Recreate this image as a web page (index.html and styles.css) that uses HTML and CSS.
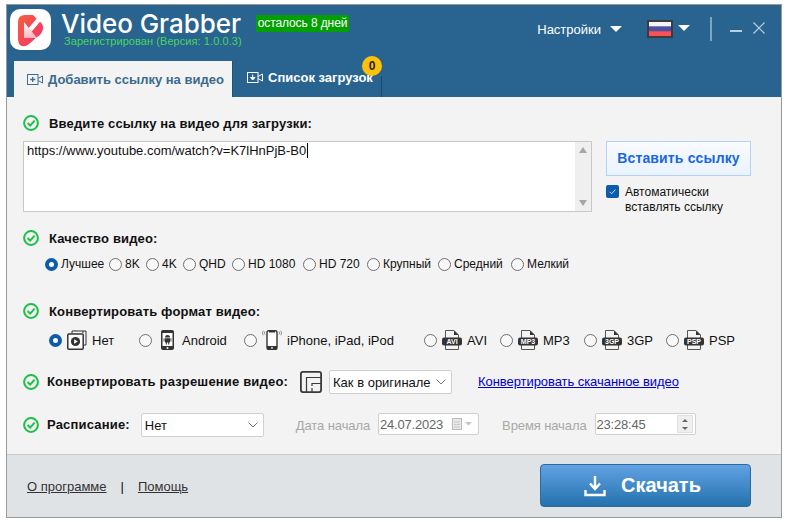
FILE: index.html
```html
<!DOCTYPE html>
<html lang="ru">
<head>
    <meta charset="UTF-8">
    <title>Video Grabber</title>
    <link rel="stylesheet" href="styles.css">
</head>
<body>
    <svg class="defs" width="0" height="0">
        <symbol id="okIcon" viewBox="0 0 16 16">
            <circle cx="8" cy="8" r="6.9" fill="none" stroke="#1cbf48" stroke-width="2"/>
            <path d="M4.6 8 7.2 10.6 11.6 5.6" fill="none" stroke="#1cbf48" stroke-width="2"/>
        </symbol>
        <symbol id="fileIcon" viewBox="0 0 20 20">
            <path d="M3.5 8V.5H12L16.5 5V8M3.5 15V19.5H16.5V15" fill="none" stroke="#555" stroke-width="1"/>
            <path d="M12 .5V5H16.5Z" fill="#333"/>
            <rect x="0" y="7.5" width="20" height="8" rx="2" fill="#333"/>
        </symbol>
    </svg>

    <div id="window">
        <div id="header">
            <div class="top-row">
                <svg class="logo" viewBox="0 0 41 41">
                    <defs>
                        <linearGradient id="logoGrad" x1="0" y1="0" x2="1" y2="1">
                            <stop offset="0" stop-color="#f4613c"/>
                            <stop offset="1" stop-color="#f52f72"/>
                        </linearGradient>
                        <linearGradient id="arrowGrad" x1="0" y1="0" x2="0" y2="1">
                            <stop offset="0" stop-color="#fff"/>
                            <stop offset="1" stop-color="#ffb4bc"/>
                        </linearGradient>
                    </defs>
                    <rect width="41" height="41" rx="10" fill="#fff"/>
                    <path d="M8 13Q8 6 15 6H23L28 11Q34 15 33 20Q32 25 27 28L19 35Q14 39 10 36Q8 34 8 29Z" fill="url(#logoGrad)"/>
                    <path d="M20 21 31 8" stroke="#fff" stroke-width="4.5" fill="none"/>
                    <path d="M14 13V29H27Z" fill="url(#arrowGrad)"/>
                </svg>
                <div class="title-col">
                    <div class="app-title">Video Grabber</div>
                    <div class="reg-text">Зарегистрирован (Версия: 1.0.0.3)</div>
                </div>
                <div class="days-left">осталось 8 дней</div>
                <div class="top-right">
                    <span class="settings">Настройки</span>
                    <span class="arrow settings-arrow"></span>
                    <svg class="flag" viewBox="0 0 26 18">
                        <rect width="26" height="18" fill="#3c3c3c"/>
                        <rect x="2" y="2" width="22" height="4.6" fill="#f4f4f8"/>
                        <rect x="2" y="6.6" width="22" height="4.6" fill="#4a4fa8"/>
                        <rect x="2" y="11.2" width="22" height="4.8" fill="#f9505a"/>
                    </svg>
                    <span class="arrow flag-arrow"></span>
                    <span class="divider"></span>
                    <span class="minimize"></span>
                    <svg class="close" viewBox="0 0 12 12"><path d="M.5.5 11.5 11.5M11.5.5.5 11.5" stroke="#b9cfdd" stroke-width="1.2" fill="none"/></svg>
                </div>
            </div>
            <div class="tabs">
                <div class="tab active">
                    <svg class="tab-icon" viewBox="0 0 16 11">
                        <rect x=".5" y=".5" width="10.5" height="10" fill="none" stroke="#3d6d90"/>
                        <path d="M5.7 3V8M3.2 5.5H8.2" stroke="#3d6d90" stroke-width="1.3"/>
                        <path d="M11 4.5 15.5 2V9L11 6.5" fill="none" stroke="#3d6d90"/>
                    </svg>
                    Добавить ссылку на видео
                </div>
                <div class="tab inactive">
                    <svg class="tab-icon" viewBox="0 0 16 11">
                        <rect x=".5" y=".5" width="10.5" height="10" fill="none" stroke="#fff"/>
                        <path d="M5.7 2.5V6M3.5 5.5 5.7 8 8 5.5Z" stroke="#fff" fill="#fff"/>
                        <path d="M11 4.5 15.5 2V9L11 6.5" fill="none" stroke="#fff"/>
                    </svg>
                    Список загрузок
                    <span class="badge">0</span>
                </div>
            </div>
        </div>

        <div id="main">
            <div class="section-title first">
                <svg class="ok"><use href="#okIcon"/></svg>
                <label>Введите ссылку на видео для загрузки:</label>
            </div>
            <div class="url-row">
                <div class="url-box">
                    <div class="url-text"><span>https://www.youtube.com/watch?v=K7lHnPjB-B0</span></div>
                    <div class="scrollbar">
                        <span class="sb-up"></span>
                        <span class="sb-down"></span>
                    </div>
                </div>
                <div class="paste-col">
                    <button class="paste-btn" type="button">Вставить ссылку</button>
                    <div class="auto-paste">
                        <span class="checkbox">
                            <svg viewBox="0 0 13 13"><path d="M3.6 6.8 5.6 8.8 9.4 4.6" fill="none" stroke="#cfe2f5" stroke-width="1"/></svg>
                        </span>
                        <span class="auto-text">Автоматически<br>вставлять ссылку</span>
                    </div>
                </div>
            </div>

            <div class="section-title quality">
                <svg class="ok"><use href="#okIcon"/></svg>
                <label>Качество видео:</label>
            </div>
            <div class="quality-row">
                <span class="opt"><i class="radio on"></i>Лучшее</span>
                <span class="opt"><i class="radio"></i>8K</span>
                <span class="opt"><i class="radio"></i>4K</span>
                <span class="opt"><i class="radio"></i>QHD</span>
                <span class="opt"><i class="radio"></i>HD 1080</span>
                <span class="opt"><i class="radio"></i>HD 720</span>
                <span class="opt"><i class="radio"></i>Крупный</span>
                <span class="opt"><i class="radio"></i>Средний</span>
                <span class="opt"><i class="radio"></i>Мелкий</span>
            </div>

            <div class="section-title format">
                <svg class="ok"><use href="#okIcon"/></svg>
                <label>Конвертировать формат видео:</label>
            </div>
            <div class="format-row">
                <span class="fmt">
                    <i class="radio on"></i>
                    <svg class="fmt-icon wide" viewBox="0 0 20 20">
                        <path d="M5 3.5V1H16V3M8 1V.5M16 1H19V15H17" fill="none" stroke="#333" stroke-width="1"/>
                        <rect x=".8" y="4" width="15.4" height="15.2" rx="1" fill="#fff" stroke="#333" stroke-width="1.5"/>
                        <circle cx="8.5" cy="11.5" r="4.6" fill="#333"/>
                        <path d="M7.2 9.2V13.8L10.8 11.5Z" fill="#fff"/>
                    </svg>
                    Нет
                </span>
                <span class="fmt">
                    <i class="radio"></i>
                    <svg class="fmt-icon android" viewBox="0 0 15 20">
                        <rect x="1" y="0" width="13" height="20" rx="2" fill="#333"/>
                        <rect x="2.5" y="3" width="10" height="13" fill="#fff"/>
                        <path d="M5 7.5A2.5 2.5 0 0 1 10 7.5ZM5 8.2H10V12.5H5ZM3.6 8.2H4.5V11.5H3.6ZM10.5 8.2H11.4V11.5H10.5ZM5.8 12.5H6.8V14.6H5.8ZM8.2 12.5H9.2V14.6H8.2Z" fill="#333"/>
                        <circle cx="7.5" cy="18" r="1" fill="#fff"/>
                    </svg>
                    Android
                </span>
                <span class="fmt">
                    <i class="radio"></i>
                    <svg class="fmt-icon wide" viewBox="0 0 20 20">
                        <rect x="5" y=".7" width="10" height="18.6" rx="1.5" fill="#fff" stroke="#333" stroke-width="1.4"/>
                        <path d="M5 16H15V19.5H5ZM7 1H13V2.4H7Z" fill="#333"/>
                        <circle cx="10" cy="17.8" r=".9" fill="#fff"/>
                        <path d="M3 1.5Q1.8 3 3 4.5M1.2.8Q-.4 3 1.2 5.2M17 1.5Q18.2 3 17 4.5M18.8.8Q20.4 3 18.8 5.2" fill="none" stroke="#666" stroke-width=".7"/>
                    </svg>
                    iPhone, iPad, iPod
                </span>
                <span class="fmt">
                    <i class="radio"></i>
                    <svg class="fmt-icon" viewBox="0 0 20 20"><use href="#fileIcon"/><text x="10" y="14" class="file-label">AVI</text></svg>
                    AVI
                </span>
                <span class="fmt">
                    <i class="radio"></i>
                    <svg class="fmt-icon" viewBox="0 0 20 20"><use href="#fileIcon"/><text x="10" y="14" class="file-label">MP3</text></svg>
                    MP3
                </span>
                <span class="fmt">
                    <i class="radio"></i>
                    <svg class="fmt-icon" viewBox="0 0 20 20"><use href="#fileIcon"/><text x="10" y="14" class="file-label">3GP</text></svg>
                    3GP
                </span>
                <span class="fmt">
                    <i class="radio"></i>
                    <svg class="fmt-icon" viewBox="0 0 20 20"><use href="#fileIcon"/><text x="10" y="14" class="file-label">PSP</text></svg>
                    PSP
                </span>
            </div>

            <div class="option-row resolution">
                <svg class="ok"><use href="#okIcon"/></svg>
                <label class="option-label">Конвертировать разрешение видео:</label>
                <svg class="res-icon" viewBox="0 0 22 22">
                    <rect x=".9" y=".9" width="20.2" height="20.2" rx="2" fill="none" stroke="#3a3a3a" stroke-width="1.8"/>
                    <path d="M6.5 21V6.5H21" fill="none" stroke="#3a3a3a" stroke-width="1.2"/>
                    <path d="M12 21V17M12 15V12.5H21" fill="none" stroke="#3a3a3a" stroke-width="1.2"/>
                </svg>
                <div class="select res-select">Как в оригинале<svg class="chevron" viewBox="0 0 10 6"><path d="M.5.5 5 5 9.5.5" fill="none" stroke="#777"/></svg></div>
                <a class="convert-link" href="#">Конвертировать скачанное видео</a>
            </div>

            <div class="option-row schedule">
                <svg class="ok"><use href="#okIcon"/></svg>
                <label class="option-label">Расписание:</label>
                <div class="select sched-select">Нет<svg class="chevron" viewBox="0 0 10 6"><path d="M.5.5 5 5 9.5.5" fill="none" stroke="#777"/></svg></div>
                <span class="muted date-label">Дата начала</span>
                <div class="field date-field">
                    24.07.2023
                    <svg class="cal" viewBox="0 0 20 12">
                        <rect x=".5" y=".5" width="9" height="11" fill="#e8e8e8" stroke="#bbb"/>
                        <path d="M2 4H8M2 6.5H8M2 9H8" stroke="#c8c8c8"/>
                        <path d="M13 4H20L16.5 7.5Z" fill="#c4c4c4"/>
                    </svg>
                </div>
                <span class="muted time-label">Время начала</span>
                <div class="field time-field">
                    23:28:45
                    <div class="spin">
                        <span class="spin-up"></span>
                        <span class="spin-down"></span>
                    </div>
                </div>
            </div>
        </div>

        <div id="footer">
            <a class="foot-link" href="#">О программе</a>
            <span class="foot-sep">|</span>
            <a class="foot-link" href="#">Помощь</a>
            <button class="download-btn" type="button">
                <svg viewBox="0 0 22 22"><path d="M11 1V13M6 8.5 11 14 16 8.5M1.5 15V20H20.5V15" fill="none" stroke="#fff" stroke-width="2.4"/></svg>
                Скачать
            </button>
        </div>
    </div>
</body>
</html>
```

FILE: styles.css
```css
* {
    box-sizing: border-box;
}
html, body {
    margin: 0;
    padding: 0;
    background-color: #fff;
    font-family: "Liberation Sans", Arial, sans-serif;
    font-size: 12px;
    color: #111;
}
.defs {
    position: absolute;
}
#window {
    width: 776px;
    height: 514px;
    margin: 4px 0 0 6px;
    border: 1px solid #999;
    display: flex;
    flex-direction: column;
}

/* header */
#header {
    height: 92px;
    background-color: #28648f;
    color: #fff;
}
.top-row {
    height: 56px;
    display: flex;
    align-items: flex-start;
    padding-left: 3px;
}
.logo {
    width: 41px;
    height: 41px;
    margin-top: 4px;
}
.title-col {
    width: 180px;
    margin-left: 10px;
}
.app-title {
    margin-top: 8px;
    height: 22px;
    line-height: 22px;
    font-family: Inter, "Liberation Sans", sans-serif;
    font-size: 26px;
    font-weight: 500;
    letter-spacing: -.05px;
    white-space: nowrap;
}
.reg-text {
    margin-left: 3px;
    height: 12px;
    line-height: 12px;
    font-size: 11px;
    letter-spacing: .07px;
    color: #47d65c;
    white-space: nowrap;
}
.days-left {
    margin: 10px 0 0 15px;
    width: 93px;
    height: 17px;
    line-height: 17px;
    background-color: #00a000;
    text-align: center;
    font-size: 12px;
    letter-spacing: -.1px;
}
.top-right {
    margin-left: auto;
    height: 48px;
    padding-right: 16px;
    display: flex;
    align-items: center;
}
.settings {
    font-size: 13px;
}
.arrow {
    width: 0;
    height: 0;
    border-left: 6px solid transparent;
    border-right: 6px solid transparent;
    border-top: 6px solid #fff;
}
.settings-arrow {
    margin-left: 9px;
}
.flag {
    width: 26px;
    height: 18px;
    margin-left: 25px;
}
.flag-arrow {
    margin: -2px 0 0 5px;
}
.divider {
    width: 2px;
    height: 24px;
    margin-left: 20px;
    background-color: #7fa5bf;
}
.minimize {
    width: 12px;
    height: 2px;
    margin: 3px 0 0 18px;
    background-color: #b9cfdd;
}
.close {
    width: 12px;
    height: 12px;
    margin: -2px 0 0 11px;
}
.tabs {
    height: 36px;
    display: flex;
    padding-left: 7px;
}
.tab {
    display: flex;
    align-items: center;
    position: relative;
    font-size: 13px;
    font-weight: bold;
    white-space: nowrap;
}
.tab.active {
    width: 218px;
    padding-left: 13px;
    background-color: #f3f3f3;
    color: #3a6a8c;
}
.tab.inactive {
    width: 150px;
    padding: 0 0 4px 14px;
    border-left: 1px solid #1f5478;
    color: #fff;
}
.tab.inactive::after {
    content: "";
    position: absolute;
    right: 0;
    bottom: 0;
    width: 1px;
    height: 21px;
    background-color: #1c4a6b;
}
.tab-icon {
    width: 16px;
    height: 11px;
    margin-right: 5px;
}
.badge {
    position: absolute;
    top: -5px;
    right: 0;
    width: 20px;
    height: 20px;
    line-height: 20px;
    border-radius: 50%;
    background-color: #ffc107;
    color: #222;
    text-align: center;
    font-size: 12px;
}

/* main */
#main {
    height: 357px;
    padding-left: 16px;
    background-color: #f3f3f3;
}
.section-title {
    height: 16px;
    display: flex;
    align-items: center;
}
.section-title.first {
    margin-top: 18px;
}
.section-title.quality {
    margin-top: 18px;
}
.section-title.format {
    margin-top: 31px;
}
.ok {
    width: 16px;
    height: 16px;
    flex: none;
}
.section-title label {
    margin-left: 10px;
    font-size: 13px;
    font-weight: bold;
    letter-spacing: .15px;
    white-space: nowrap;
}
.url-row {
    display: flex;
    height: 71px;
    margin-top: 10px;
}
.url-box {
    width: 569px;
    height: 71px;
    display: flex;
    background-color: #fff;
    border: 1px solid #c8c8c8;
}
.url-text {
    flex: 1;
    padding: 1px 3px;
    font-size: 13px;
    line-height: 16px;
}
.url-text span {
    border-right: 1px solid #000;
    padding-right: 1px;
}
.scrollbar {
    width: 16px;
    background-color: #efefef;
    display: flex;
    flex-direction: column;
    justify-content: space-between;
    align-items: center;
    padding: 5px 0;
}
.sb-up, .sb-down {
    width: 0;
    height: 0;
    border-left: 4px solid transparent;
    border-right: 4px solid transparent;
}
.sb-up {
    border-bottom: 6px solid #a6a6a6;
}
.sb-down {
    border-top: 6px solid #a6a6a6;
}
.paste-col {
    margin-left: 14px;
    width: 145px;
}
.paste-btn {
    display: block;
    width: 145px;
    height: 35px;
    padding: 0 0 1px;
    background: linear-gradient(#f9fbff, #e9f2fd);
    border: 1px solid #b5d4f5;
    color: #1767dd;
    font-family: inherit;
    font-size: 14px;
    font-weight: bold;
    letter-spacing: .15px;
}
.auto-paste {
    display: flex;
    margin-top: 9px;
}
.checkbox {
    width: 13px;
    height: 13px;
    border-radius: 2px;
    background-color: #0d5cab;
    flex: none;
}
.checkbox svg {
    display: block;
}
.auto-text {
    margin-left: 6px;
    line-height: 15px;
    white-space: nowrap;
}
.radio {
    display: inline-block;
    width: 13px;
    height: 13px;
    flex: none;
    border: 1px solid #6e6e6e;
    border-radius: 50%;
    background-color: #f8f8f8;
}
.radio.on {
    border: 4px solid #0d5cab;
    background-color: #fff;
}
.quality-row {
    height: 16px;
    margin: 10px 0 0 22px;
    display: grid;
    grid-template-columns: 64px 37px 37px 49px 71px 64px 71px 73px auto;
}
.opt {
    display: flex;
    align-items: center;
    gap: 3px;
    white-space: nowrap;
}
.format-row {
    height: 24px;
    margin: 9px 0 0 26px;
    display: grid;
    grid-template-columns: 90px 105px 180px 76px 84px 82px auto;
}
.fmt {
    display: flex;
    align-items: center;
    gap: 5px;
    font-size: 13px;
    white-space: nowrap;
}
.fmt-icon {
    width: 20px;
    height: 20px;
}
.fmt-icon.android {
    width: 15px;
    margin: 0 2px 0 3px;
}
.file-label {
    fill: #fff;
    font-size: 7px;
    font-weight: bold;
    text-anchor: middle;
}
.option-row {
    height: 24px;
    display: flex;
    align-items: center;
}
.option-row.resolution {
    margin-top: 18px;
}
.option-row.schedule {
    margin-top: 19px;
}
.option-label {
    margin: 0 0 1px 8px;
    font-size: 13px;
    font-weight: bold;
    letter-spacing: .18px;
    white-space: nowrap;
}
.res-icon {
    width: 22px;
    height: 22px;
    margin-left: 12px;
}
.select {
    height: 24px;
    display: flex;
    align-items: center;
    justify-content: space-between;
    padding: 0 5px 0 3px;
    background-color: #fff;
    border: 1px solid #d0d0d0;
    border-radius: 2px;
    font-size: 13px;
    white-space: nowrap;
}
.res-select {
    width: 123px;
    margin-left: 7px;
}
.sched-select {
    width: 123px;
    margin-left: 11px;
}
.chevron {
    width: 10px;
    height: 6px;
}
.convert-link {
    margin: 0 0 2px 26px;
    color: #00c;
    font-size: 13px;
    letter-spacing: -.06px;
    white-space: nowrap;
}
.muted {
    color: #a8a8a8;
    font-size: 13px;
    letter-spacing: -.1px;
    white-space: nowrap;
}
.date-label {
    margin-left: 32px;
}
.time-label {
    margin-left: 23px;
}
.field {
    width: 101px;
    height: 22px;
    margin: -2px 0 0 8px;
    display: flex;
    align-items: center;
    justify-content: space-between;
    padding: 0 2px 0 1px;
    background-color: #fff;
    border: 1px solid #d0d0d0;
    border-radius: 2px;
    font-size: 13px;
    letter-spacing: -.2px;
    color: #666;
}
.cal {
    width: 20px;
    height: 12px;
    margin-right: 4px;
}
.spin {
    width: 16px;
    height: 18px;
    background-color: #efefef;
    border: 1px solid #e0e0e0;
    display: flex;
    flex-direction: column;
    justify-content: space-around;
    align-items: center;
}
.spin-up, .spin-down {
    width: 0;
    height: 0;
    border-left: 3px solid transparent;
    border-right: 3px solid transparent;
}
.spin-up {
    border-bottom: 3px solid #666;
}
.spin-down {
    border-top: 3px solid #666;
}

/* footer */
#footer {
    flex: 1;
    display: flex;
    align-items: center;
    padding: 0 30px 0 20px;
    background-color: #e0e3e6;
    border-top: 1px solid #ccc;
    font-size: 13px;
}
.foot-link {
    color: #333;
}
.foot-sep {
    margin: 0 14px;
}
.download-btn {
    margin: 0 0 1px auto;
    width: 211px;
    height: 43px;
    padding: 0 6px 0 0;
    display: flex;
    align-items: center;
    justify-content: center;
    gap: 15px;
    background: linear-gradient(#62a2e2, #2472ad);
    border: 1px solid #2a6a9e;
    border-radius: 4px;
    color: #fff;
    font-family: inherit;
    font-size: 20px;
    font-weight: bold;
}
.download-btn svg {
    width: 22px;
    height: 22px;
}
```
